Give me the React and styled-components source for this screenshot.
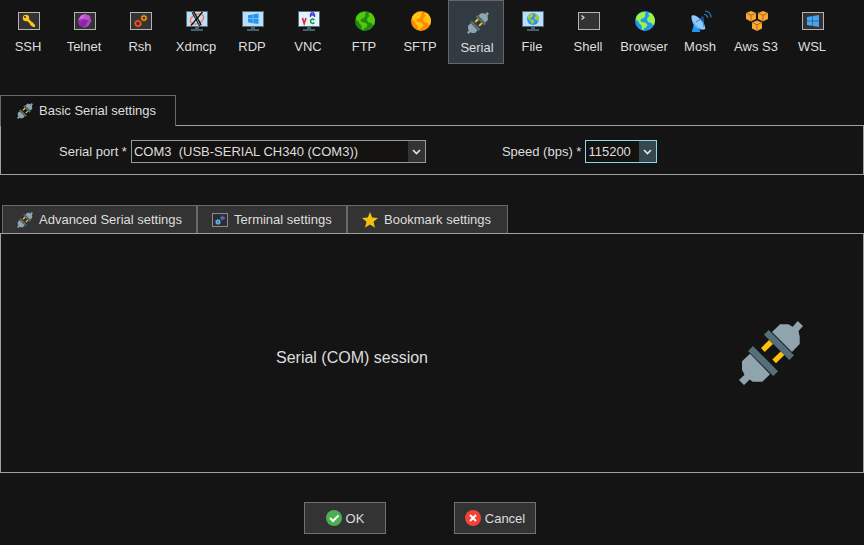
import React from 'react';
import styled, { createGlobalStyle } from 'styled-components';

// ---- Icons ----

const Plug = ({ size = 64 }) => (
    <svg width={size} height={size} viewBox="0 0 64 64" aria-hidden="true">
        <path fill="#90a4ae" d="M58.7 0 64 5l-4.5 5 1.2 5.7V23L53 31 33 11l8-7.7h8.3l4.4 2.4z" />
        <path fill="#90a4ae" d="M11 32.7 3 40.3v8.4l2.5 5L0 59l5 5 5.7-5.5 3 2.2h9.6l7.7-7.4z" />
        <path fill="#546e7a" d="M29.7 9 55 34.3 50.3 39 25 13.7zM14 25l25 25.3-4.7 4.7L9 30z" />
        <path fill="#ffc107" d="m30 19 4 4-8.3 8-3.7-4zM41.7 30.5l3.6 3.5-8.3 8.3-3.7-3.8z" />
    </svg>
)

const Svg = ({ children }) => (
    <svg width="24" height="24" viewBox="0 0 24 24" aria-hidden="true">{children}</svg>
)

const Frame = ({ children }) => (
    <Svg>
        <rect x="2.5" y="3.5" width="21" height="17" fill="#333" stroke="#b4b4b4" />
        {children}
    </Svg>
)

const Monitor = ({ children }) => (
    <Svg>
        <path fill="#455f6b" d="M11 18h4v2h4v2H7v-2h4z" />
        <rect x="2" y="2" width="22" height="16" fill="#546e7a" />
        <rect x="3" y="3" width="20" height="14" fill="#bbdefb" />
        {children}
    </Svg>
)

const Globe = ({ sea, land, cx = 13, cy = 12, r = 10 }) => (
    <g transform={`translate(${cx - r} ${cy - r}) scale(${r / 10})`}>
        <circle cx="10" cy="10" r="10" fill={sea} />
        <path fill={land} d="M1.3 6C2.6 3.400 5 1.500 8 1l3 .3-1 2 .5 1.700L8 7.500 6 8l-.5 2L7 11l3.500.7 2 2-1.500 2.800-2 .8-.5 2.200L7 18.500l-.5-4L4.500 12.500 3 10 1 9z" />
        <path fill={land} d="M13 2.500 15.500 1.700C18.300 3.600 20 6.600 20 10l-.8 3.500-1.700.5-1-2-3-.7-1.500-2.300.5-2.500 2-1.500z" />
    </g>
)

const Windows = ({ x, y, size, fill }) => (
    <g transform={`translate(${x} ${y}) scale(${size / 12})`}>
        <path fill={fill} d="M0 2 5.5 1v4.7H0zM6 .9 12 0v5.7H6zM0 6.3h5.5V11L0 10zM6 6.3h6V12l-6-.9z" />
    </g>
)

const Gear = ({ cx, cy, r, color }) => (
    <g stroke={color} fill="none">
        <circle cx={cx} cy={cy} r={r} strokeWidth="1.5" />
        <circle cx={cx} cy={cy} r={r + 1} strokeWidth="1" strokeDasharray="1.3 1.3" />
    </g>
)

const Box = ({ x, y }) => (
    <g transform={`translate(${x} ${y})`}>
        <path fill="#f9a733" d="M5 0 10 2v6l-5 2.5L0 8V2z" />
        <path fill="none" stroke="#8a5410" strokeWidth=".7" d="M.5 2.300 5 4.300l4.500-2M5 4.300V10" />
    </g>
)

const ICONS = {
    SSH: (
        <Frame>
            <path stroke="#ffc41c" strokeWidth="2.5" fill="none" d="m10 9 8 8" />
            <circle cx="10" cy="9" r="3.2" fill="#ffc41c" />
            <path fill="#ffc41c" d="m14 15 2-2 3 3v2h-2l-1-1.5-1 .5z" />
            <circle cx="9" cy="8" r="1" fill="#333" />
        </Frame>
    ),
    Telnet: (
        <Frame>
            <path fill="#ab47bc" d="m13 5 5 2 1.500 5-3 5L12 19l-5-3-1-5 3-4.500z" />
            <path fill="#ce6bdd" d="m13 5-4 1.500L6 11l5.500-1z" />
            <path fill="#ba55cc" d="m13 5 5 2-1.500 4.500-5-1.500z" />
            <path fill="#8e24aa" d="m11.500 10 5 1.500L12 19l-5-3z" />
            <path fill="#9c27b0" d="m6 11 5.500-1L7 16z" />
        </Frame>
    ),
    Rsh: (
        <Frame>
            <Gear cx={10} cy={14.5} r={2.5} color="#f4511e" />
            <Gear cx={16} cy={9} r={2} color="#fb8c00" />
        </Frame>
    ),
    Xdmcp: (
        <Monitor>
            <ellipse cx="13" cy="10" rx="7" ry="4.5" fill="none" stroke="#ff7043" strokeWidth="1.3" transform="rotate(-25 13 10)" />
            <path d="m9 3 7.5 13.500" stroke="#111" strokeWidth="3" />
            <path d="m9 3.500 7 12.500" stroke="#dceefa" strokeWidth=".6" />
            <path d="M18.500 3 7 16.500" stroke="#111" strokeWidth="1.3" />
        </Monitor>
    ),
    RDP: <Monitor><Windows x={8} y={4.5} size={10.5} fill="#2196f3" /></Monitor>,
    VNC: (
        <Monitor>
            <rect x="3" y="3" width="20" height="14" fill="#e3f2fd" />
            <path d="m6.500 9 1.700 5.500L10 9" fill="none" stroke="#e5262b" strokeWidth="1.6" />
            <path d="M14.500 8V5.500l1-1.500h2l1 1.500V8M14.500 6h4" fill="none" stroke="#3535e8" strokeWidth="1.3" />
            <path d="M18.300 11c-1-1.500-3.800-1-3.800 1.300s2.800 2.700 3.800 1.200" fill="none" stroke="#149b2e" strokeWidth="1.5" />
        </Monitor>
    ),
    FTP: <Svg><Globe sea="#208a13" land="#55c90b" /></Svg>,
    SFTP: <Svg><Globe sea="#ff8a00" land="#ffc414" /></Svg>,
    Serial: (
        <Svg>
            <g transform="translate(2 2) scale(.344)">
                <Plug />
            </g>
        </Svg>
    ),
    File: <Monitor><Globe sea="#2196f3" land="#a4c93c" cx={13} cy={10} r={6} /></Monitor>,
    Shell: <Frame><path d="m5.500 6.500 2.500 2-2.500 2" fill="none" stroke="#ddd" strokeWidth="1.2" /></Frame>,
    Browser: <Svg><Globe sea="#2196f3" land="#9cf542" /></Svg>,
    Mosh: (
        <Svg>
            <path fill="#2196f3" d="m6 15 4 2 1 4h1v2H4v-1z" />
            <path fill="#64b5f6" d="M4 6.500 17 20c-3 1.500-7.500.500-10-2.500S2.500 9.500 4 6.500z" />
            <path fill="#90caf9" d="M4 6.500c2-1 6 1 9 4.500s5 7.500 4 9c-2 1-6-1-9-4.500s-5-7-4-9z" />
            <path stroke="#3b8fd0" strokeWidth="1.2" d="m8 13 6.500-4M14.500 9 16 18" />
            <circle cx="14.5" cy="9" r="1.7" fill="#0d47a1" />
            <path fill="none" stroke="#287cbd" strokeWidth="1.2" d="M16 5.500c2 0 3.500 1.500 3.500 3.500M17 2c3.500 0 6 3 6 6.500" />
        </Svg>
    ),
    'Aws S3': <Svg><Box x={2} y={2} /><Box x={14} y={2} /><Box x={8} y={11.5} /></Svg>,
    WSL: <Frame><Windows x={7} y={6} size={12} fill="#42a5f5" /></Frame>
}

const TerminalIcon = () => (
    <svg width="16" height="16" viewBox="0 0 16 16" aria-hidden="true">
        <rect x=".5" y="1.5" width="15" height="13" fill="#2b2f35" stroke="#8c8c8c" />
        <Gear cx={6} cy={10} r={1.5} color="#64b5f6" />
        <Gear cx={10.5} cy={6} r={1} color="#5c6bc0" />
    </svg>
)

const Star = () => (
    <svg width="16" height="16" viewBox="0 0 16 16" aria-hidden="true">
        <path fill="#f4c20d" d="m8 0 2.2 5.500 5.800.4-4.500 3.800 1.500 6L8 12.500l-5 3.200 1.500-6L0 5.900l5.800-.4z" />
    </svg>
)

const Badge = ({ color, d }) => (
    <svg width="16" height="16" viewBox="0 0 16 16" aria-hidden="true">
        <circle cx="8" cy="8" r="8" fill={color} />
        <path fill="none" stroke="#fff" strokeWidth="2" d={d} />
    </svg>
)

// Drop-down with its arrow cell
const Dropdown = ({ id, value, width, focused }) => (
    <SelectBox $width={width} $focused={focused}>
        <Select id={id} defaultValue={value}>
            <option value={value}>{value}</option>
        </Select>
        <Arrow $focused={focused}>
            <svg width="9" height="6" viewBox="0 0 9 6" aria-hidden="true">
                <path d="m1 1 3.500 3.500L8 1" fill="none" stroke="#e6e6e6" strokeWidth="1.6" />
            </svg>
        </Arrow>
    </SelectBox>
)

class App extends React.Component {
    constructor(props){
        super(props)
        this.state = {
            session: 'Serial'
        }
    }

    // Pick the session type
    select = (session) => {
        this.setState({ session })
    }

    render() {
        let { session } = this.state
        return (
            <Page>
                <GlobalStyle />
                <Toolbar>
                    { Object.keys(ICONS).map((name) => (
                        <SessionButton key={name} $active={name === session} onClick={() => this.select(name)}>
                            {ICONS[name]}
                            {name}
                        </SessionButton>
                    ))}
                </Toolbar>

                <Section>
                    <Tabs>
                        <OpenTab $width={176}><Plug size={16} />Basic Serial settings</OpenTab>
                    </Tabs>
                    <Form>
                        <Field>
                            <label htmlFor="port">Serial port *</label>
                            <Dropdown id="port" value={'COM3\u00a0 (USB-SERIAL CH340 (COM3))'} width={295} />
                        </Field>
                        <Field>
                            <label htmlFor="speed">Speed (bps) *</label>
                            <Dropdown id="speed" value="115200" width={72} focused />
                        </Field>
                    </Form>
                </Section>

                <Section>
                    <Tabs $inset>
                        <Tab $width={195}><Plug size={16} />Advanced Serial settings</Tab>
                        <Tab $width={150}><TerminalIcon />Terminal settings</Tab>
                        <Tab $width={161}><Star />Bookmark settings</Tab>
                    </Tabs>
                    <Summary>
                        <Title>Serial (COM) session</Title>
                        <Picture><Plug /></Picture>
                    </Summary>
                </Section>

                <Footer>
                    <ActionButton>
                        <Badge color="#4caf50" d="m4 8 3 3 5.500-5.500" />
                        <span>OK</span>
                    </ActionButton>
                    <ActionButton>
                        <Badge color="#f44336" d="m5 5 6 6M11 5l-6 6" />
                        <span>Cancel</span>
                    </ActionButton>
                </Footer>
            </Page>
        )
    }
}

export default App;

const GlobalStyle = createGlobalStyle`
    * {
        box-sizing: border-box;
    }
    body {
        margin: 0;
        background: #141414;
    }
    svg {
        flex: none;
    }
    button, select {
        font: inherit;
        color: inherit;
    }
`;

const Page = styled.div`
    color: #dedede;
    font: 13px/16px "Liberation Sans", Arial, sans-serif;
`;

const Toolbar = styled.nav`
    display: flex;
    flex-wrap: wrap;
`;

const SessionButton = styled.button`
    display: flex;
    flex-direction: column;
    align-items: center;
    gap: 6px;
    width: 56px;
    height: 64px;
    padding: ${props => props.$active ? '9px 0 0 2px' : '8px 0 0'};
    border: 1px solid ${props => props.$active ? '#666' : 'transparent'};
    background: ${props => props.$active ? '#323a42' : 'transparent'};
    white-space: nowrap;
`;

const Section = styled.section`
    margin-top: 30px;
`;

const Tabs = styled.div`
    display: flex;
    padding-left: ${props => props.$inset ? '2px' : '0'};
`;

const Tab = styled.button`
    display: flex;
    align-items: center;
    gap: 6px;
    min-width: ${props => props.$width}px;
    height: 28px;
    padding: 1px 14px 0;
    border: 1px solid #696969;
    border-bottom: 0;
    background: #333;
    white-space: nowrap;
`;

const OpenTab = styled(Tab)`
    position: relative;
    height: 31px;
    margin: 1px 0 -1px;
    padding: 0 16px;
    background: #141414;
`;

const Form = styled.form`
    display: flex;
    flex-wrap: wrap;
    gap: 12px 76px;
    padding: 14px 58px 11px;
    border: 1px solid #a0a0a0;
`;

const Field = styled.div`
    display: flex;
    align-items: center;
    gap: 4px;
`;

const SelectBox = styled.div`
    display: grid;
    grid-template-columns: 1fr 17px;
    width: ${props => props.$width}px;
    height: 23px;
    border: 1px solid ${props => props.$focused ? '#86d9f0' : '#999'};
`;

const Select = styled.select`
    grid-area: 1 / 1 / 2 / 3;
    appearance: none;
    padding: 0 18px 0 2px;
    border: 0;
    outline: 0;
    background: #141210;
`;

const Arrow = styled.span`
    grid-area: 1 / 2;
    z-index: 1;
    display: grid;
    place-items: center;
    background: ${props => props.$focused ? '#37474f' : '#333'};
    pointer-events: none;
`;

const Summary = styled.div`
    display: flex;
    align-items: center;
    height: 240px;
    border: 1px solid #a0a0a0;
`;

const Title = styled.h1`
    flex: 1;
    margin: 0;
    padding-top: 10px;
    font-size: 16px;
    font-weight: normal;
    line-height: 20px;
    text-align: center;
`;

const Picture = styled.div`
    display: flex;
    padding: 0 60px 0 36px;
`;

const Footer = styled.footer`
    display: flex;
    justify-content: center;
    gap: 68px;
    padding: 29px 24px 0 0;
`;

const ActionButton = styled.button`
    display: flex;
    align-items: center;
    justify-content: center;
    gap: 4px;
    width: 82px;
    height: 32px;
    padding: 0;
    border: 1px solid #707070;
    background: #333;

    span {
        padding-top: 2px;
    }
`;
